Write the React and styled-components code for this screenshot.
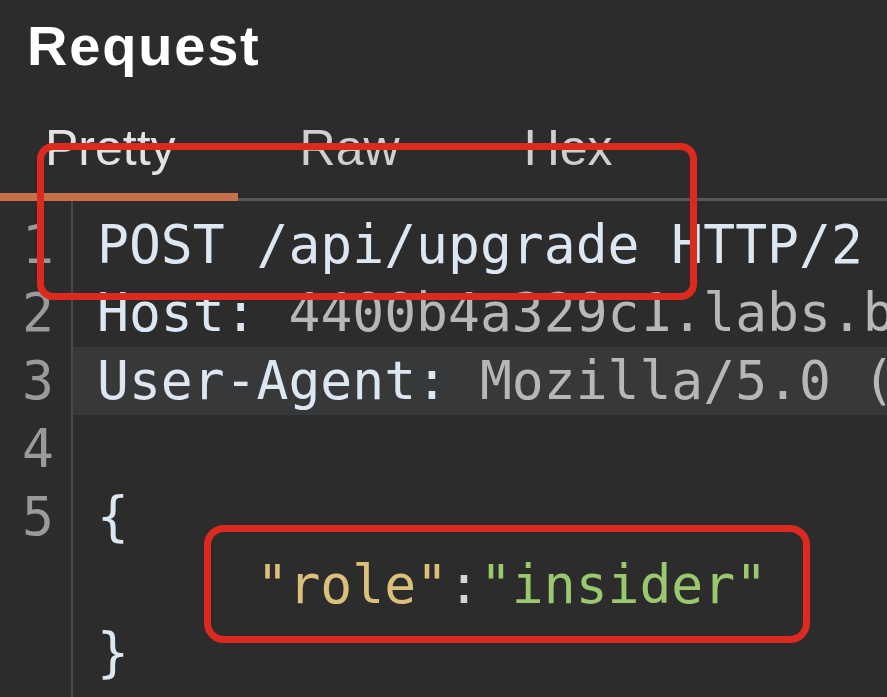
import React from "react";
import styled, { createGlobalStyle } from "styled-components";

const Global = createGlobalStyle`
  html, body { margin: 0; padding: 0; background: #2c2c2c; }
  body { width: 887px; height: 697px; overflow: hidden; }
  #root { height: 100%; }
`;

const Page = styled.div`
  position: relative;
  width: 887px;
  height: 697px;
  overflow: hidden;
  background: #2c2c2c;
  display: flex;
  flex-direction: column;
`;

const Title = styled.h1`
  margin: 0;
  padding: 18px 0 0 27px;
  font-family: "Liberation Sans", Arial, sans-serif;
  font-weight: 700;
  font-size: 56px;
  line-height: 56px;
  letter-spacing: 1.8px;
  color: #ffffff;
`;

const TabStrip = styled.div`
  display: flex;
  margin-top: 49px;
  margin-left: -17px;
  border-bottom: 3px solid #575757;
`;

const Tab = styled.div`
  padding: 0 62px 17px;
  font-family: "Liberation Sans", Arial, sans-serif;
  font-size: 50px;
  line-height: 50px;
  color: ${(p) => (p.$active ? "#e2e2e2" : "#cfcfcf")};
  border-bottom: 8px solid ${(p) => (p.$active ? "#c7714a" : "transparent")};
  margin-bottom: ${(p) => (p.$active ? "-3px" : "0")};
`;

const Editor = styled.div`
  flex: 1;
  display: flex;
  flex-direction: column;
  font-family: "DejaVu Sans Mono", Menlo, monospace;
  font-size: 53px;
  line-height: 68px;
`;

const Row = styled.div`
  display: flex;
  height: 68px;
  flex: ${(p) => (p.$fill ? 1 : "none")};
`;

const LineNo = styled.div`
  width: 71px;
  flex: none;
  box-sizing: border-box;
  padding-right: 17px;
  text-align: right;
  color: #9a9a9a;
`;

const Code = styled.div`
  flex: 1;
  border-left: 2px solid #4a4a4a;
  padding-left: 24px;
  white-space: pre;
  overflow: hidden;
  background: ${(p) => (p.$hl ? "#37383a" : "transparent")};
  color: #dde7f1;
`;

const Gutter = styled.div`
  height: 10px;
  display: flex;
`;

const Tok = styled.span`
  color: ${(p) =>
    ({ key: "#dde7f1", val: "#b7b7b7", prop: "#dbc07c", str: "#9ac86f", punc: "#d6d6d6" }[p.$k])};
`;

const Mark = styled.div`
  position: absolute;
  box-sizing: border-box;
  border: 7px solid #de2a1e;
  border-radius: ${(p) => p.$r}px;
  pointer-events: none;
`;

const lines = [
  { n: "1", content: <Tok $k="key">POST /api/upgrade HTTP/2</Tok> },
  {
    n: "2",
    content: (
      <>
        <Tok $k="key">Host:</Tok> <Tok $k="val">4400b4a329c1.labs.bugforge.io</Tok>
      </>
    ),
  },
  {
    n: "3",
    hl: true,
    content: (
      <>
        <Tok $k="key">User-Agent:</Tok>{" "}
        <Tok $k="val">Mozilla/5.0 (Macintosh; Intel Mac OS X 10_15_7)</Tok>
      </>
    ),
  },
  { n: "4", content: "" },
  { n: "5", content: <Tok $k="key">{"{"}</Tok> },
  {
    n: "",
    content: (
      <>
        {"     "}
        <Tok $k="prop">"role"</Tok>
        <Tok $k="punc">:</Tok>
        <Tok $k="str">"insider"</Tok>
      </>
    ),
  },
  { n: "", content: <Tok $k="key">{"}"}</Tok>, fill: true },
];

export default function App() {
  return (
    <Page>
      <Global />
      <Title>Request</Title>
      <TabStrip>
        <Tab $active>Pretty</Tab>
        <Tab>Raw</Tab>
        <Tab>Hex</Tab>
      </TabStrip>
      <Editor>
        <Gutter>
          <LineNo />
          <Code />
        </Gutter>
        {lines.map((l, i) => (
          <Row key={i} $fill={l.fill}>
            <LineNo>{l.n}</LineNo>
            <Code $hl={l.hl}>{l.content}</Code>
          </Row>
        ))}
      </Editor>
      <Mark $r={16} style={{ left: 37, top: 143, width: 660, height: 157 }} />
      <Mark $r={20} style={{ left: 204, top: 525, width: 606, height: 118 }} />
    </Page>
  );
}
